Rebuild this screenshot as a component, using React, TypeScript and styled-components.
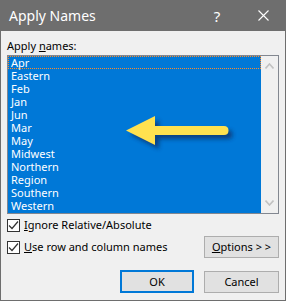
import React from "react";
import styled, { createGlobalStyle } from "styled-components";

const GlobalStyle = createGlobalStyle`
  html, body {
    margin: 0;
    padding: 0;
    background: #f0f0f0;
  }
  * {
    box-sizing: border-box;
  }
`;

const Window = styled.div`
  width: 286px;
  height: 301px;
  display: flex;
  flex-direction: column;
  background: #f0f0f0;
  border: 1px solid #6e6e6e;
  border-top: none;
  font-family: "Noto Sans", "Open Sans", sans-serif;
  font-size: 11px;
  color: #000;
`;

const TitleBar = styled.div`
  height: 31px;
  margin: 0 -1px;
  background: #6e6e6e;
  display: flex;
  align-items: center;
  padding-left: 9px;
  color: #fff;
  font-size: 14px;
`;

const Title = styled.div`
  flex: 1;
  margin-top: -1px;
`;

const TitleButton = styled.div`
  width: 46px;
  height: 31px;
  display: flex;
  align-items: center;
  justify-content: center;
  font-size: 15px;
`;

const Body = styled.div`
  flex: 1;
  display: flex;
  flex-direction: column;
  padding: 8px 6px 7px 6px;
`;

const Label = styled.div`
  height: 16px;
  line-height: 14px;
`;

const ListBox = styled.div`
  position: relative;
  height: 159px;
  border: 1px solid #828790;
  background: #fff;
  display: flex;
`;

const Items = styled.div`
  flex: 1;
  background: #0078d7;
  padding-bottom: 1px;
`;

const Item = styled.div<{ $focus?: boolean }>`
  height: 13px;
  line-height: 13px;
  padding-left: 3px;
  color: #fff;
  outline: ${(p) => (p.$focus ? "1px dotted #ff8c28" : "none")};
  outline-offset: -1px;
`;

const ScrollBar = styled.div`
  width: 17px;
  background: #f0f0f0;
  display: flex;
  flex-direction: column;
  justify-content: space-between;
  align-items: center;
  padding: 7px 0 7px;
`;

const Arrow = styled.svg`
  position: absolute;
  left: 112px;
  top: 54px;
`;

const CheckRow = styled.div`
  display: flex;
  align-items: center;
  gap: 4px;
  line-height: 14px;
`;

const OptionRow = styled.div`
  display: flex;
  align-items: center;
  justify-content: space-between;
  margin-top: 4px;
`;

const Box = styled.div`
  width: 13px;
  height: 13px;
  border: 1px solid #333;
  background: #fff;
  display: flex;
  align-items: center;
  justify-content: center;
`;

const Button = styled.div<{ $default?: boolean }>`
  width: ${(p) => (p.$default ? 74 : 75)}px;
  height: ${(p) => (p.$default ? 23 : 22)}px;
  background: #e1e1e1;
  border: ${(p) => (p.$default ? "2px solid #0078d7" : "1px solid #adadad")};
  display: flex;
  align-items: center;
  justify-content: center;
  line-height: 14px;
`;

const ButtonRow = styled.div`
  display: flex;
  justify-content: flex-end;
  align-items: center;
  gap: 10px;
  margin-top: auto;
`;

const names = [
  "Apr",
  "Eastern",
  "Feb",
  "Jan",
  "Jun",
  "Mar",
  "May",
  "Midwest",
  "Northern",
  "Region",
  "Southern",
  "Western",
];

const Check = () => (
  <Box>
    <svg width="11" height="11" viewBox="0 0 11 11">
      <path d="M1 5.5 L4 8.5 L10 1.5" fill="none" stroke="#333" strokeWidth="1.2" />
    </svg>
  </Box>
);

const Chevron = ({ up }: { up?: boolean }) => (
  <svg width="9" height="6" viewBox="0 0 9 6">
    <path
      d={up ? "M0.5 5.5 L4.5 1 L8.5 5.5" : "M0.5 0.5 L4.5 5 L8.5 0.5"}
      fill="none"
      stroke="#c2c2c2"
      strokeWidth="1.6"
    />
  </svg>
);

const App = () => {
  return (
    <>
      <GlobalStyle />
      <Window>
        <TitleBar>
          <Title>Apply Names</Title>
          <TitleButton>?</TitleButton>
          <TitleButton>
            <svg width="11" height="11" viewBox="0 0 11 11">
              <path d="M0.5 0.5 L10.5 10.5 M10.5 0.5 L0.5 10.5" stroke="#fff" strokeWidth="1.1" />
            </svg>
          </TitleButton>
        </TitleBar>
        <Body>
          <Label>
            Apply <u>n</u>ames:
          </Label>
          <ListBox>
            <Items>
              {names.map((n, i) => (
                <Item key={n} $focus={i === 0}>
                  {n}
                </Item>
              ))}
            </Items>
            <ScrollBar>
              <Chevron up />
              <Chevron />
            </ScrollBar>
            <Arrow width="120" height="46" viewBox="0 0 120 46">
              <defs>
                <filter id="sh" x="-10%" y="-30%" width="130%" height="170%">
                  <feGaussianBlur stdDeviation="2" />
                </filter>
              </defs>
              <path
                d="M6 20.5 L35 6 L35 16 L104 16 Q108.5 16 108.5 20.5 Q108.5 25 104 25 L35 25 L35 35 Z"
                fill="#0b2f66"
                opacity="0.75"
                transform="translate(4 4)"
                filter="url(#sh)"
              />
              <path
                d="M6 20.5 L35 6 L35 16 L104 16 Q108.5 16 108.5 20.5 Q108.5 25 104 25 L35 25 L35 35 Z"
                fill="#ffe14f"
              />
            </Arrow>
          </ListBox>
          <CheckRow style={{ marginTop: 4 }}>
            <Check />
            <span>
              <u>I</u>gnore Relative/Absolute
            </span>
          </CheckRow>
          <OptionRow>
            <CheckRow>
              <Check />
              <span>
                <u>U</u>se row and column names
              </span>
            </CheckRow>
            <Button>
              <span>
                <u>O</u>ptions &gt; &gt;
              </span>
            </Button>
          </OptionRow>
          <ButtonRow>
            <Button $default>OK</Button>
            <Button>Cancel</Button>
          </ButtonRow>
        </Body>
      </Window>
    </>
  );
};

export default App;
